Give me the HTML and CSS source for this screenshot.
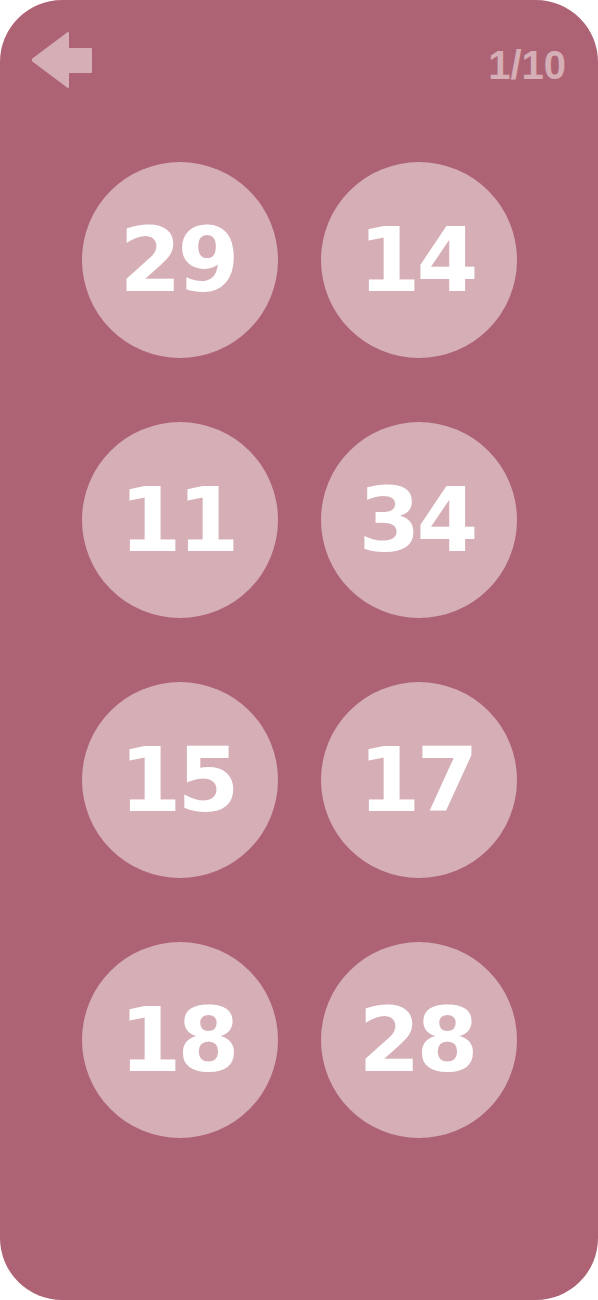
FILE: index.html
```html
<!DOCTYPE html>
<html lang="en">
<head>
    <meta charset="UTF-8">
    <meta name="viewport" content="width=device-width, initial-scale=1.0">
    <title>Numbers</title>
    <link rel="stylesheet" href="styles.css">
</head>
<body>
    <div class="card">
        <div class="top-bar">
            <button class="back-button" aria-label="Back">
                <svg width="60" height="56" viewBox="0 0 60 56">
                    <path d="M0 28 L36 1 L36 17 L59 17 L59 40 L36 40 L36 55 Z" fill="#d5aeb6" stroke="#d5aeb6" stroke-width="2" stroke-linejoin="round"/>
                </svg>
            </button>
            <span class="counter">1/10</span>
        </div>

        <ul class="numbers">
            <li class="ball">29</li>
            <li class="ball">14</li>
            <li class="ball">11</li>
            <li class="ball">34</li>
            <li class="ball">15</li>
            <li class="ball">17</li>
            <li class="ball">18</li>
            <li class="ball">28</li>
        </ul>
    </div>
</body>
</html>
```

FILE: styles.css
```css
body {
    margin: 0;
    background-color: white;
    font-family: "Liberation Sans", Arial, sans-serif;
}

.card {
    width: 598px;
    height: 1300px;
    box-sizing: border-box;
    background-color: #ad6374;
    border-radius: 62px;
    padding: 32px 32px 0 32px;
}

.top-bar {
    display: flex;
    justify-content: space-between;
    align-items: center;
    height: 56px;
}

.back-button {
    background: none;
    border: none;
    padding: 0;
    cursor: pointer;
    display: flex;
}

.counter {
    color: #d5aeb6;
    font-size: 40px;
    font-weight: bold;
    margin-top: 10px;
}

.numbers {
    list-style: none;
    margin: 74px 0 0 0;
    padding: 0;
    display: grid;
    grid-template-columns: 196px 196px;
    column-gap: 43px;
    row-gap: 64px;
    justify-content: center;
}

.ball {
    width: 196px;
    height: 196px;
    box-sizing: border-box;
    padding-right: 4px;
    border-radius: 50%;
    background-color: #d5aeb6;
    color: white;
    font-family: "DejaVu Sans", sans-serif;
    font-size: 89px;
    font-weight: bold;
    letter-spacing: -4px;
    display: flex;
    align-items: center;
    justify-content: center;
}
```
